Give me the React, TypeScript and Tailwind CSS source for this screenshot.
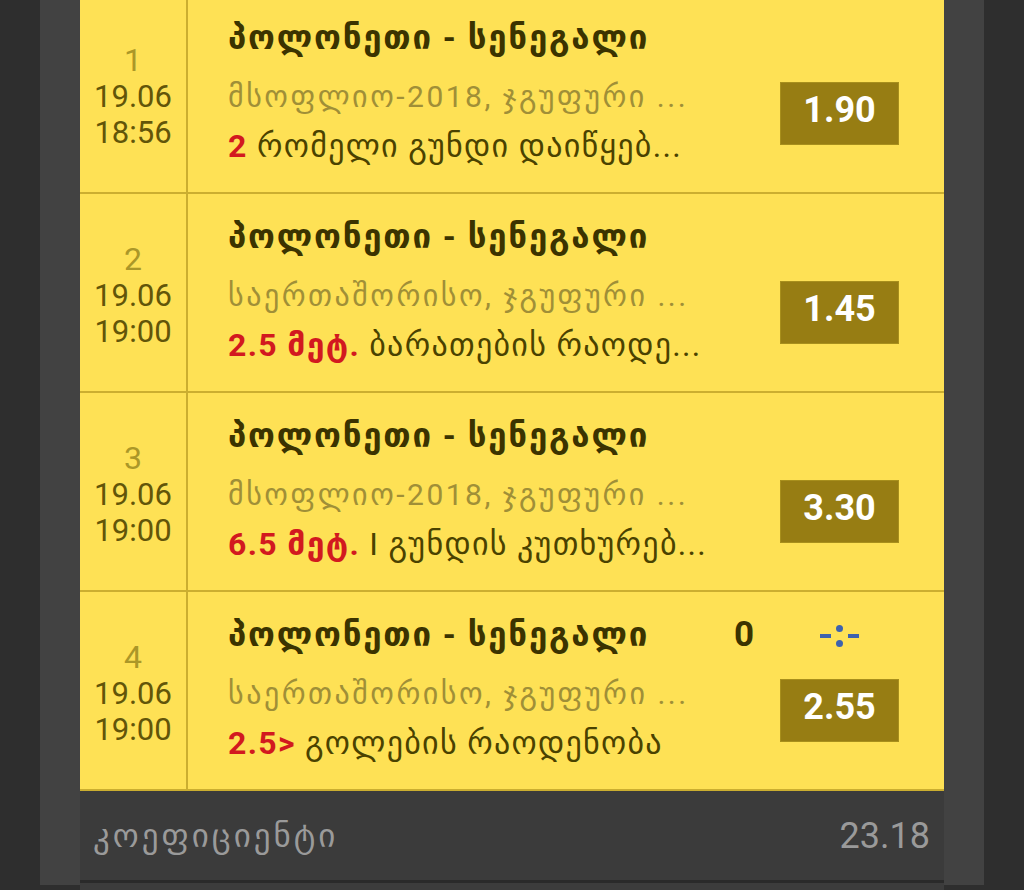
const font = { fontFamily: 'Roboto, "DejaVu Sans", "Noto Sans", sans-serif' };

type Bet = {
  num: number;
  date: string;
  time: string;
  title: string;
  league: string;
  mark: string;
  market: string;
  odd: string;
  score?: string;
};

const bets: Bet[] = [
  {
    num: 1,
    date: '19.06',
    time: '18:56',
    title: 'პოლონეთი - სენეგალი',
    league: 'მსოფლიო-2018, ჯგუფური ...',
    mark: '2',
    market: 'რომელი გუნდი დაიწყებ...',
    odd: '1.90',
  },
  {
    num: 2,
    date: '19.06',
    time: '19:00',
    title: 'პოლონეთი - სენეგალი',
    league: 'საერთაშორისო, ჯგუფური ...',
    mark: '2.5 მეტ.',
    market: 'ბარათების რაოდე...',
    odd: '1.45',
  },
  {
    num: 3,
    date: '19.06',
    time: '19:00',
    title: 'პოლონეთი - სენეგალი',
    league: 'მსოფლიო-2018, ჯგუფური ...',
    mark: '6.5 მეტ.',
    market: 'I გუნდის კუთხურებ...',
    odd: '3.30',
  },
  {
    num: 4,
    date: '19.06',
    time: '19:00',
    title: 'პოლონეთი - სენეგალი',
    league: 'საერთაშორისო, ჯგუფური ...',
    mark: '2.5>',
    market: 'გოლების რაოდენობა',
    odd: '2.55',
    score: '0',
  },
];

function BetRow({ bet }: { bet: Bet }) {
  return (
    <div className="flex h-[199px] border-b-2 border-[#cbae30] bg-[#fee155]">
      <div className="flex w-[108px] shrink-0 flex-col items-center justify-center border-r-2 border-[#cbae30] pt-[4px] text-[#625509]">
        <div className="h-[38px] text-[32px] leading-[38px] text-[#ab9728]">{bet.num}</div>
        <div className="h-[36px] text-[31px] leading-[36px]">{bet.date}</div>
        <div className="h-[36px] text-[31px] leading-[36px]">{bet.time}</div>
      </div>
      <div className="flex min-w-0 flex-1 flex-col pl-[40px] pt-[16px]">
        <div className="flex h-[54px] items-center justify-between pr-[26px] font-bold leading-[54px] text-[#3b3300]">
          <span className="whitespace-nowrap text-[33px] tracking-[1.8px]">{bet.title}</span>
          {bet.score && <span className="text-[35px]">{bet.score}</span>}
        </div>
        <div className="mt-[7px] h-[50px] whitespace-nowrap text-[30px] leading-[50px] tracking-[2.5px] text-[#a08f37]">
          {bet.league}
        </div>
        <div className="h-[48px] whitespace-nowrap text-[32px] leading-[48px] tracking-[1.3px] text-[#4a4200]">
          <span className="font-bold text-[#d2191f]">{bet.mark}</span> {bet.market}
        </div>
      </div>
      <div className="flex w-[164px] shrink-0 flex-col items-start pt-[23px]">
        <div className="mb-[22px] flex h-[42px] w-[119px] items-center justify-center">
          {bet.score && (
            <span className="flex items-center gap-[5px]">
              <span className="h-[4px] w-[11px] bg-[#3d62ae]" />
              <span className="flex flex-col gap-[8px]">
                <span className="h-[7px] w-[7px] rounded-full bg-[#3d62ae]" />
                <span className="h-[7px] w-[7px] rounded-full bg-[#3d62ae]" />
              </span>
              <span className="h-[4px] w-[11px] bg-[#3d62ae]" />
            </span>
          )}
        </div>
        <div className="flex h-[63px] w-[119px] items-center justify-center border border-[#a88f1c] bg-[#977d13] pb-[8px] text-[36px] font-bold text-white">
          {bet.odd}
        </div>
      </div>
    </div>
  );
}

export default function App() {
  return (
    <div className="h-[890px] w-[1024px] overflow-hidden bg-[#2e2e2e] px-[40px]" style={font}>
      <div className="h-full bg-[#424242] px-[40px]">
        <div className="-mt-[5px]">
          {bets.map((bet) => (
            <BetRow key={bet.num} bet={bet} />
          ))}
        </div>
        <div className="flex h-[92px] items-center justify-between border-b-[3px] border-[#2a2a2a] bg-[#3b3b3b] pl-[13px] pr-[14px] text-[#9a9a9a]">
          <span className="text-[33px] tracking-[3px]">კოეფიციენტი</span>
          <span className="text-[36px]">23.18</span>
        </div>
        <div className="h-[20px] bg-[#3c3c3c]" />
      </div>
    </div>
  );
}
